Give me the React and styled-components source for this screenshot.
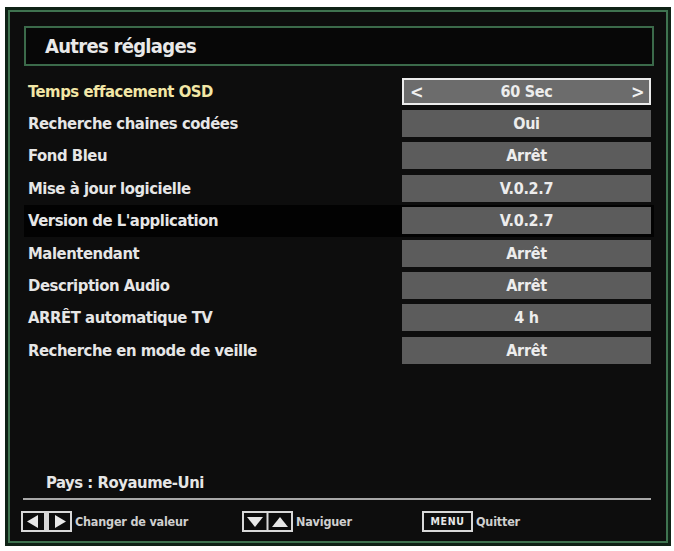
import React from 'react';
import styled, { createGlobalStyle } from 'styled-components';

const GlobalStyle = createGlobalStyle`
  html, body {
    margin: 0;
    padding: 0;
    background: #ffffff;
  }
  body {
    font-family: "DejaVu Sans Condensed", "DejaVu Sans", sans-serif;
    font-stretch: condensed;
  }
`;

const Page = styled.div`
  width: 674px;
  height: 551px;
  padding: 7px 3px 5px 5px;
  box-sizing: border-box;
`;

const Frame = styled.div`
  height: 100%;
  box-sizing: border-box;
  background: #0d0d0d;
  border: 3px solid #0f2216;
  box-shadow: inset 0 0 0 2px #3f7350;
  padding: 16px 14px 11px 13px;
  display: flex;
  flex-direction: column;
`;

const TitleBox = styled.div`
  height: 40px;
  margin-left: 3px;
  box-sizing: border-box;
  border: 2px solid #3b6a4a;
  background: #070707;
  display: flex;
  align-items: center;
  padding-left: 19px;
`;

const Title = styled.h1`
  margin: 0;
  font-size: 20px;
  font-weight: bold;
  color: #e9e9e9;
  letter-spacing: -0.7px;
`;

const List = styled.div`
  margin-top: 9px;
  margin-left: 3px;
  display: flex;
  flex-direction: column;
`;

const Row = styled.div`
  height: 32.4px;
  display: flex;
  align-items: center;
  justify-content: space-between;
  background: ${p => (p.$dark ? '#020202' : 'transparent')};
`;

const Label = styled.span`
  padding-left: 4px;
  font-size: 16.5px;
  font-weight: bold;
  color: ${p => (p.$active ? '#f2e7a6' : '#e6e6e6')};
  letter-spacing: -0.45px;
`;

const Value = styled.div`
  width: 249px;
  height: 27px;
  margin-right: 3px;
  box-sizing: border-box;
  background: ${p => (p.$active ? '#6c6c6c' : '#5c5c5c')};
  border: ${p => (p.$active ? '2px solid #ececec' : 'none')};
  display: flex;
  align-items: center;
  justify-content: space-between;
  padding: 0 6px;
  font-size: 16px;
  font-weight: bold;
  color: #ededed;
  letter-spacing: -0.3px;
`;

const Arrow = styled.span`
  width: 12px;
  font-size: 18px;
  color: #f0f0f0;
  text-align: ${p => p.$side};
`;

const ValueText = styled.span`
  flex: 1;
  text-align: center;
`;

const Spacer = styled.div`
  flex: 1;
`;

const Country = styled.div`
  padding-left: 25px;
  font-size: 16.5px;
  font-weight: bold;
  color: #e6e6e6;
  letter-spacing: -0.45px;
`;

const Divider = styled.div`
  height: 2px;
  background: #a8a8a8;
  margin: 6px 3px 10px 2px;
`;

const Footer = styled.div`
  display: flex;
  align-items: center;
  height: 22px;
`;

const Hint = styled.div`
  display: flex;
  align-items: center;
  gap: 3px;
  width: ${p => p.$w}px;
`;

const HintText = styled.span`
  font-size: 12.5px;
  font-weight: bold;
  color: #cfcfcf;
  letter-spacing: -0.2px;
`;

const KeyBox = styled.span`
  display: inline-flex;
  align-items: center;
  justify-content: center;
  width: 51px;
  height: 21px;
  box-sizing: border-box;
  border: 2px solid #d8d8d8;
  font-family: "DejaVu Sans", sans-serif;
  font-size: 10.5px;
  font-weight: bold;
  color: #e8e8e8;
  letter-spacing: 0.6px;
`;

const rows = [
  ['Temps effacement OSD', '60 Sec'],
  ['Recherche chaines codées', 'Oui'],
  ['Fond Bleu', 'Arrêt'],
  ['Mise à jour logicielle', 'V.0.2.7'],
  ["Version de L'application", 'V.0.2.7'],
  ['Malentendant', 'Arrêt'],
  ['Description Audio', 'Arrêt'],
  ['ARRÊT automatique TV', '4 h'],
  ['Recherche en mode de veille', 'Arrêt'],
];

const LeftRightIcon = () => (
  <svg width="51" height="21" viewBox="0 0 51 21">
    <rect x="1" y="1" width="49" height="19" fill="none" stroke="#d8d8d8" strokeWidth="2" />
    <rect x="23" y="1" width="5" height="19" fill="#d8d8d8" />
    <polygon points="6,10.5 17,4 17,17" fill="#e8e8e8" />
    <polygon points="45,10.5 34,4 34,17" fill="#e8e8e8" />
  </svg>
);

const UpDownIcon = () => (
  <svg width="51" height="21" viewBox="0 0 51 21">
    <rect x="1" y="1" width="49" height="19" fill="none" stroke="#d8d8d8" strokeWidth="2" />
    <line x1="25.5" y1="1" x2="25.5" y2="20" stroke="#d8d8d8" strokeWidth="2" />
    <polygon points="5,6 21,6 13,16" fill="#e8e8e8" />
    <polygon points="30,16 46,16 38,6" fill="#e8e8e8" />
  </svg>
);

const App = () => {
  return (
    <Page>
      <GlobalStyle />
      <Frame>
        <TitleBox>
          <Title>Autres réglages</Title>
        </TitleBox>
        <List>
          {rows.map(([label, value], i) => (
            <Row key={label} $dark={i === 4}>
              <Label $active={i === 0}>{label}</Label>
              <Value $active={i === 0}>
                {i === 0 && <Arrow $side="left">&lt;</Arrow>}
                <ValueText>{value}</ValueText>
                {i === 0 && <Arrow $side="right">&gt;</Arrow>}
              </Value>
            </Row>
          ))}
        </List>
        <Spacer />
        <Country>Pays : Royaume-Uni</Country>
        <Divider />
        <Footer>
          <Hint $w={221}>
            <LeftRightIcon />
            <HintText>Changer de valeur</HintText>
          </Hint>
          <Hint $w={180}>
            <UpDownIcon />
            <HintText>Naviguer</HintText>
          </Hint>
          <Hint $w={120}>
            <KeyBox>MENU</KeyBox>
            <HintText>Quitter</HintText>
          </Hint>
        </Footer>
      </Frame>
    </Page>
  );
};

export default App;
